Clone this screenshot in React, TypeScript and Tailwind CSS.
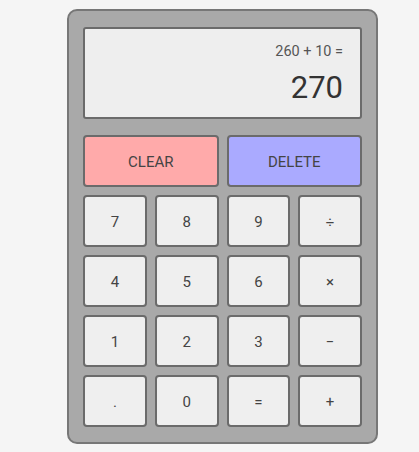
import React from 'react';

const keys = ['7', '8', '9', '÷', '4', '5', '6', '×', '1', '2', '3', '−', '.', '0', '=', '+'];

const Key = ({ label }: { label: string }) => (
  <button className="h-[52px] pt-[2px] rounded-[4px] border-2 border-[#6b6b6b] bg-[#efefef] text-[15px] text-[#444]">
    {label}
  </button>
);

export default function App() {
  return (
    <div
      className="min-h-screen bg-[#f5f5f5] pt-[9px] pl-[67px]"
      style={{ fontFamily: 'Roboto, "Liberation Sans", sans-serif' }}
    >
      <div className="w-[311px] h-[435px] rounded-[10px] border-2 border-[#777] bg-[#a9a9a9] px-[14px] pt-[16px]">
        <div className="h-[92px] rounded-[3px] border-2 border-[#6b6b6b] bg-[#eeeeee] pr-[17px] flex flex-col items-end">
          <div className="mt-[12px] text-[14.5px] text-[#555]">260 + 10 =</div>
          <div className="mt-[5px] text-[31px] leading-[40px] text-[#333]">270</div>
        </div>
        <div className="mt-[16px] grid grid-cols-4 gap-[8px]">
          <button className="col-span-2 h-[52px] pt-[2px] rounded-[4px] border-2 border-[#6b6b6b] bg-[#ffaaaa] text-[15px] text-[#444]">
            CLEAR
          </button>
          <button className="col-span-2 h-[52px] pt-[2px] rounded-[4px] border-2 border-[#6b6b6b] bg-[#aaaaff] text-[15px] text-[#444]">
            DELETE
          </button>
          {keys.map((k) => (
            <Key key={k} label={k} />
          ))}
        </div>
      </div>
    </div>
  );
}
